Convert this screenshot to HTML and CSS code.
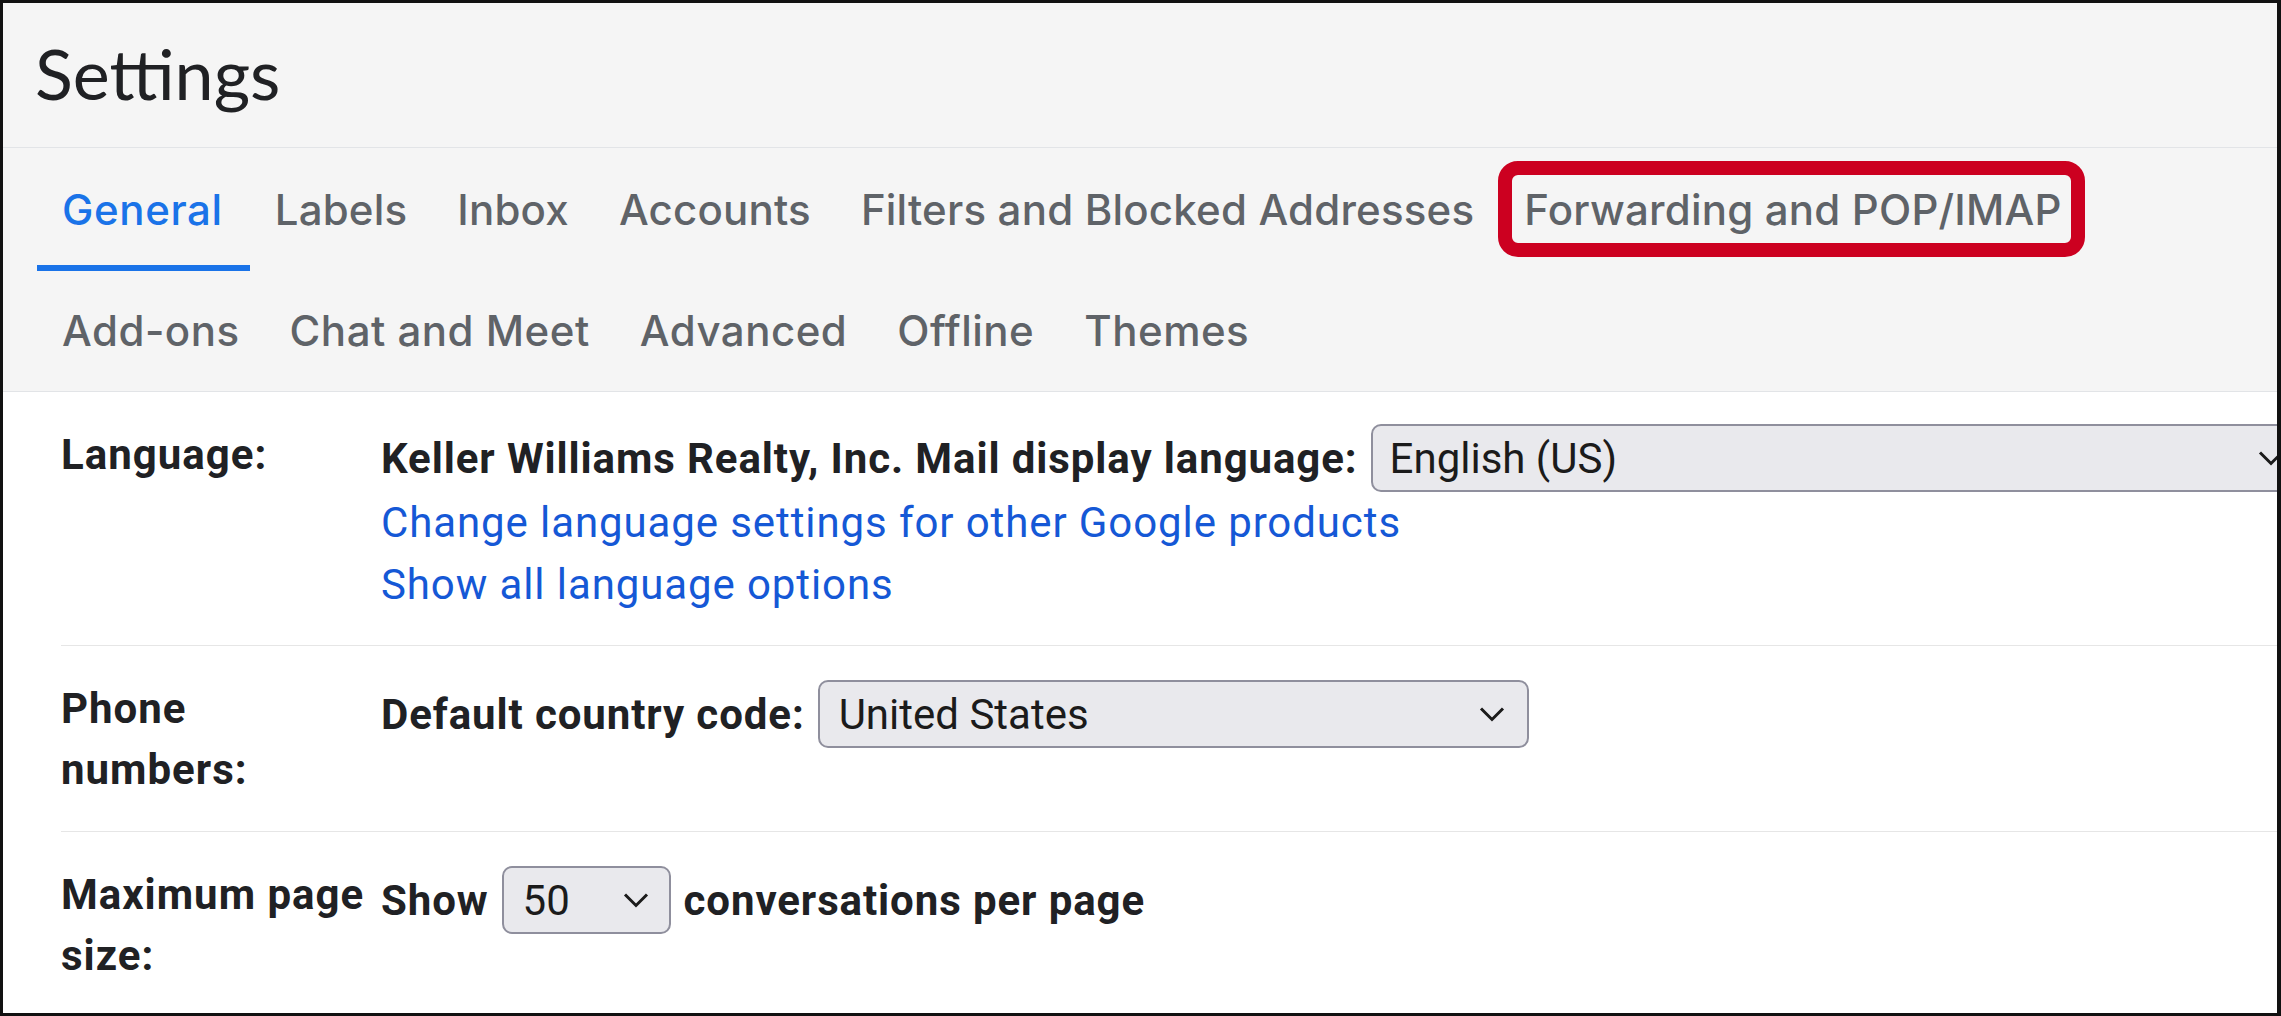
FILE: index.html
```html
<!DOCTYPE html>
<html lang="en">
<head>
<meta charset="utf-8">
<title>Settings</title>
<link rel="stylesheet" href="styles.css">
</head>
<body>
<div class="frame">
  <header class="top">
    <h1 class="title">Settings</h1>
    <nav class="tabs">
      <div class="tab-row row-first">
        <a class="tab active">General</a>
        <a class="tab">Labels</a>
        <a class="tab">Inbox</a>
        <a class="tab">Accounts</a>
        <a class="tab">Filters and Blocked Addresses</a>
        <a class="tab">Forwarding and POP/IMAP<span class="mark"></span></a>
      </div>
      <div class="tab-row row-second">
        <a class="tab">Add-ons</a>
        <a class="tab">Chat and Meet</a>
        <a class="tab">Advanced</a>
        <a class="tab">Offline</a>
        <a class="tab">Themes</a>
      </div>
    </nav>
  </header>
  <main class="content">
    <section class="setting">
      <div class="label">Language:</div>
      <div class="value">
        <div class="line">
          <span class="strong">Keller Williams Realty, Inc. Mail display language:</span>
          <span class="select select-lang"><span>English (US)</span><svg class="chev" viewBox="0 0 26 16"><path d="M2 2.5 L13 13.5 L24 2.5" fill="none" stroke="#1b1b1b" stroke-width="3"/></svg></span>
        </div>
        <a class="link">Change language settings for other Google products</a>
        <a class="link">Show all language options</a>
      </div>
    </section>
    <section class="setting">
      <div class="label">Phone<br>numbers:</div>
      <div class="value">
        <div class="line">
          <span class="strong">Default country code:</span>
          <span class="select select-country"><span>United States</span><svg class="chev" viewBox="0 0 26 16"><path d="M2 2.5 L13 13.5 L24 2.5" fill="none" stroke="#1b1b1b" stroke-width="3"/></svg></span>
        </div>
      </div>
    </section>
    <section class="setting">
      <div class="label">Maximum page<br>size:</div>
      <div class="value">
        <div class="line">
          <span class="strong">Show</span>
          <span class="select select-size"><span>50</span><svg class="chev" viewBox="0 0 26 16"><path d="M2 2.5 L13 13.5 L24 2.5" fill="none" stroke="#1b1b1b" stroke-width="3"/></svg></span>
          <span class="strong">conversations per page</span>
        </div>
      </div>
    </section>
  </main>
</div>
</body>
</html>
```

FILE: styles.css
```css
* { box-sizing: border-box; }
html, body { margin: 0; padding: 0; }
body {
  background: #fff;
  font-family: Roboto, "Liberation Sans", sans-serif;
}
.frame {
  width: 2281px;
  height: 1016px;
  border: 3px solid #111;
  border-right-width: 4px;
  overflow: hidden;
  background: #fff;
}
.top { background: #f5f5f5; }
.title {
  margin: 0;
  height: 145px;
  padding: 35px 0 0 32px;
  font-family: Lato, "Open Sans", sans-serif;
  font-weight: 400;
  font-size: 70px;
  line-height: 70px;
  color: #202124;
  border-bottom: 1px solid #e2e4e7;
}
.tabs {
  padding-left: 34px;
  border-bottom: 1px solid #e2e4e7;
}
.tab-row { display: flex; }
.tab {
  position: relative;
  display: block;
  padding: 0 25px;
  font-family: Inter, "Open Sans", sans-serif;
  font-size: 42px;
  font-weight: 500;
  letter-spacing: 0.2px;
  color: #5f6368;
  white-space: nowrap;
}
.row-first .tab { height: 123px; line-height: 123px; }
.row-second .tab { height: 120px; line-height: 120px; letter-spacing: 0.5px; }
.tab.active {
  padding: 0 27px 0 25px;
  color: #1a73e8;
  letter-spacing: 0.6px;
  box-shadow: inset 0 -6px 0 #1a73e8;
}
.mark {
  position: absolute;
  top: 13px;
  bottom: 14px;
  left: -1px;
  right: 2px;
  border: 14px solid #cc0020;
  border-radius: 20px;
}
.content { padding-left: 58px; }
.setting {
  display: flex;
  padding: 32px 0 31px;
  border-bottom: 1px solid #e6e6e6;
}
.setting:first-child { padding: 32px 0 29px; }
.label {
  flex: none;
  width: 320px;
  font-size: 42px;
  font-weight: 700;
  line-height: 61px;
  letter-spacing: 1px;
  color: #202124;
  white-space: nowrap;
}
.value {
  flex: 1;
  display: flex;
  flex-direction: column;
  align-items: flex-start;
  font-size: 42px;
  letter-spacing: 0.9px;
  color: #202124;
}
.setting + .setting .value { padding-top: 2px; }
.line {
  display: flex;
  align-items: center;
  height: 68px;
  white-space: nowrap;
}
.strong { font-weight: 700; line-height: 61px; }
.link {
  color: #1558d6;
  line-height: 62px;
  text-decoration: none;
  white-space: nowrap;
}
.select {
  flex: none;
  display: flex;
  align-items: center;
  justify-content: space-between;
  height: 68px;
  margin: 0 13px;
  padding: 0 20px 0 17px;
  background: #e9e9ed;
  border: 2px solid #8f8f9d;
  border-radius: 10px;
  font-weight: 400;
  letter-spacing: 0;
  color: #1b1b1b;
}
.select-lang { width: 935px; }
.select-country { width: 711px; padding-left: 19px; padding-right: 22px; }
.select-size { width: 169px; padding-left: 19px; }
.chev { width: 26px; height: 16px; flex: none; }
```
